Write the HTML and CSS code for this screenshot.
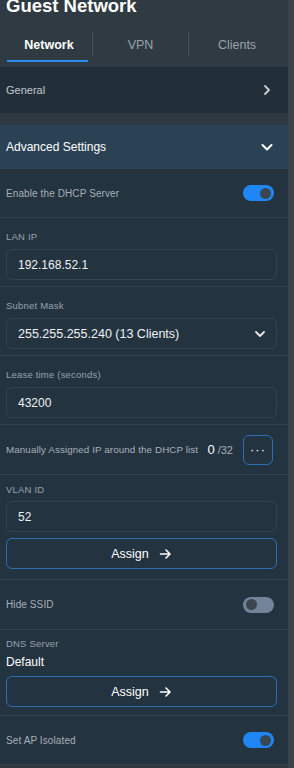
FILE: index.html
```html
<!DOCTYPE html>
<html>
<head>
<meta charset="utf-8">
<link rel="stylesheet" href="styles.css">
</head>
<body>
<div class="page">
  <div class="main">
    <header class="header">
      <h1 class="title">Guest Network</h1>
      <nav class="tabs">
        <div class="tab active">Network</div>
        <div class="tab">VPN</div>
        <div class="tab">Clients</div>
      </nav>
    </header>

    <div class="nav-row">
      <span>General</span>
      <svg class="chev" width="12" height="12" viewBox="0 0 12 12"><path d="M4 2 L8 6 L4 10" fill="none" stroke="#c9ced3" stroke-width="1.8" stroke-linecap="round" stroke-linejoin="round"/></svg>
    </div>

    <div class="gap"></div>

    <div class="adv-row">
      <span>Advanced Settings</span>
      <svg class="chev-down" width="14" height="12" viewBox="0 0 14 12"><path d="M2.5 4 L7 8.5 L11.5 4" fill="none" stroke="#ffffff" stroke-width="2" stroke-linecap="round" stroke-linejoin="round"/></svg>
    </div>

    <div class="row toggle-row">
      <span class="row-text">Enable the DHCP Server</span>
      <span class="switch on"><span class="knob"></span></span>
    </div>

    <div class="row field">
      <div class="label">LAN IP</div>
      <div class="input">192.168.52.1</div>
    </div>

    <div class="row field">
      <div class="label">Subnet Mask</div>
      <div class="input select">
        <span>255.255.255.240 (13 Clients)</span>
        <svg width="12" height="10" viewBox="0 0 12 10"><path d="M2 3 L6 7 L10 3" fill="none" stroke="#e6e9ec" stroke-width="1.8" stroke-linecap="round" stroke-linejoin="round"/></svg>
      </div>
    </div>

    <div class="row field">
      <div class="label">Lease time (seconds)</div>
      <div class="input">43200</div>
    </div>

    <div class="row manual-row">
      <span class="row-text">Manually Assigned IP around the DHCP list</span>
      <span class="count"><span class="num">0</span> /32</span>
      <span class="dots-btn">···</span>
    </div>

    <div class="row field vlan">
      <div class="label">VLAN ID</div>
      <div class="input">52</div>
      <div class="assign">Assign <svg class="arrow" width="13" height="12" viewBox="0 0 13 12"><path d="M1.5 6 H11 M7 2 L11 6 L7 10" fill="none" stroke="#ffffff" stroke-width="1.6" stroke-linecap="round" stroke-linejoin="round"/></svg></div>
    </div>

    <div class="row toggle-row tall">
      <span class="row-text">Hide SSID</span>
      <span class="switch off"><span class="knob"></span></span>
    </div>

    <div class="row field dns">
      <div class="label">DNS Server</div>
      <div class="value">Default</div>
      <div class="assign">Assign <svg class="arrow" width="13" height="12" viewBox="0 0 13 12"><path d="M1.5 6 H11 M7 2 L11 6 L7 10" fill="none" stroke="#ffffff" stroke-width="1.6" stroke-linecap="round" stroke-linejoin="round"/></svg></div>
    </div>

    <div class="row toggle-row">
      <span class="row-text">Set AP Isolated</span>
      <span class="switch on"><span class="knob"></span></span>
    </div>
  </div>
  <div class="scrollbar"></div>
</div>
</body>
</html>
```

FILE: styles.css
```css
* { box-sizing: border-box; }
html, body {
  margin: 0;
  padding: 0;
  background: #2d3840;
  font-family: "Liberation Sans", Arial, sans-serif;
  overflow: hidden;
}
.page {
  display: flex;
  width: 294px;
  height: 768px;
}
.main {
  width: 288px;
  display: flex;
  flex-direction: column;
  background: #2d3840;
}
.scrollbar {
  width: 6px;
  background: #3a434a;
}
.header {
  height: 67px;
  flex: none;
  background: #2f3a42;
  padding: 0 6px;
}
.title {
  margin: -5px 0 0 0;
  font-size: 18.5px;
  line-height: 22px;
  font-weight: bold;
  color: #ffffff;
}
.tabs {
  display: grid;
  grid-template-columns: 87px 96px 96px;
  margin-top: 15px;
  height: 25px;
}
.tab {
  position: relative;
  display: flex;
  align-items: center;
  justify-content: center;
  font-size: 12.5px;
  color: #9aa3ab;
  border-right: 1px solid #485259;
  height: 25px;
}
.tab:last-child { border-right: none; }
.tab.active {
  color: #ffffff;
  font-weight: bold;
}
.tab.active::after {
  content: "";
  position: absolute;
  left: 1px;
  right: 4px;
  top: 28px;
  height: 2px;
  background: #2a8cf0;
}
.nav-row {
  height: 46px;
  flex: none;
  background: #222f39;
  display: flex;
  align-items: center;
  justify-content: space-between;
  padding: 0 15px 0 6px;
  font-size: 11px;
  color: #c1c7cd;
}
.gap { height: 12px; flex: none; background: #2e3941; }
.adv-row {
  height: 44px;
  flex: none;
  background: #2b4255;
  display: flex;
  align-items: center;
  justify-content: space-between;
  padding: 0 14px 0 6px;
  font-size: 12px;
  color: #ffffff;
}
.row {
  flex: none;
  background: #243340;
  border-bottom: 1px solid #33414c;
  padding: 0 11px 0 6px;
}
.toggle-row {
  height: 49px;
  display: flex;
  align-items: center;
  justify-content: space-between;
  padding-right: 14px;
}
.toggle-row.tall { height: 50px; }
.row-text {
  font-size: 10px;
  color: #a7b0b8;
  letter-spacing: 0.1px;
}
.switch {
  width: 31px;
  height: 16px;
  border-radius: 8px;
  display: flex;
  align-items: center;
  padding: 0 3px;
}
.switch .knob {
  width: 11px;
  height: 11px;
  border-radius: 50%;
  background: #3a4650;
}
.switch.on { background: #1f87f5; justify-content: flex-end; }
.switch.off { background: #73839a; justify-content: flex-start; }
.switch.off .knob { background: #3b4650; }
.field {
  padding-top: 12px;
  padding-bottom: 6px;
}
.label {
  font-size: 9.5px;
  color: #98a3ad;
  height: 13px;
  line-height: 13px;
  margin-bottom: 6px;
  letter-spacing: 0.2px;
}
.input {
  height: 31px;
  width: 271px;
  border: 1px solid #35434e;
  border-radius: 6px;
  background: #243340;
  display: flex;
  align-items: center;
  padding: 0 11px;
  font-size: 12px;
  color: #eef1f3;
}
.select {
  justify-content: space-between;
  font-size: 12.5px;
  padding-right: 10px;
}
.manual-row {
  height: 50px;
  display: flex;
  align-items: center;
}
.manual-row .row-text { flex: 1; font-size: 9.8px; }
.count {
  font-size: 11px;
  color: #a7b0b8;
  margin-right: 10px;
}
.count .num { font-size: 13px; color: #ffffff; }
.dots-btn {
  width: 30px;
  height: 30px;
  border: 1px solid #2b6fb5;
  border-radius: 6px;
  display: flex;
  align-items: center;
  justify-content: center;
  color: #ffffff;
  font-size: 13px;
  letter-spacing: 1px;
  margin-right: 4px;
}
.assign {
  height: 31px;
  width: 271px;
  border: 1px solid #2b6fb5;
  border-radius: 6px;
  display: flex;
  align-items: center;
  justify-content: center;
  font-size: 12.5px;
  color: #ffffff;
}
.arrow { margin-left: 10px; }
.vlan { padding-top: 8px; padding-bottom: 10px; }
.vlan .label { margin-bottom: 5px; }
.vlan .assign { margin-top: 6px; }
.dns { padding-top: 7px; padding-bottom: 8px; }
.dns .label { margin-bottom: 1px; }
.value {
  font-size: 12px;
  color: #ffffff;
  height: 22px;
  line-height: 22px;
  margin-bottom: 3px;
}
```
